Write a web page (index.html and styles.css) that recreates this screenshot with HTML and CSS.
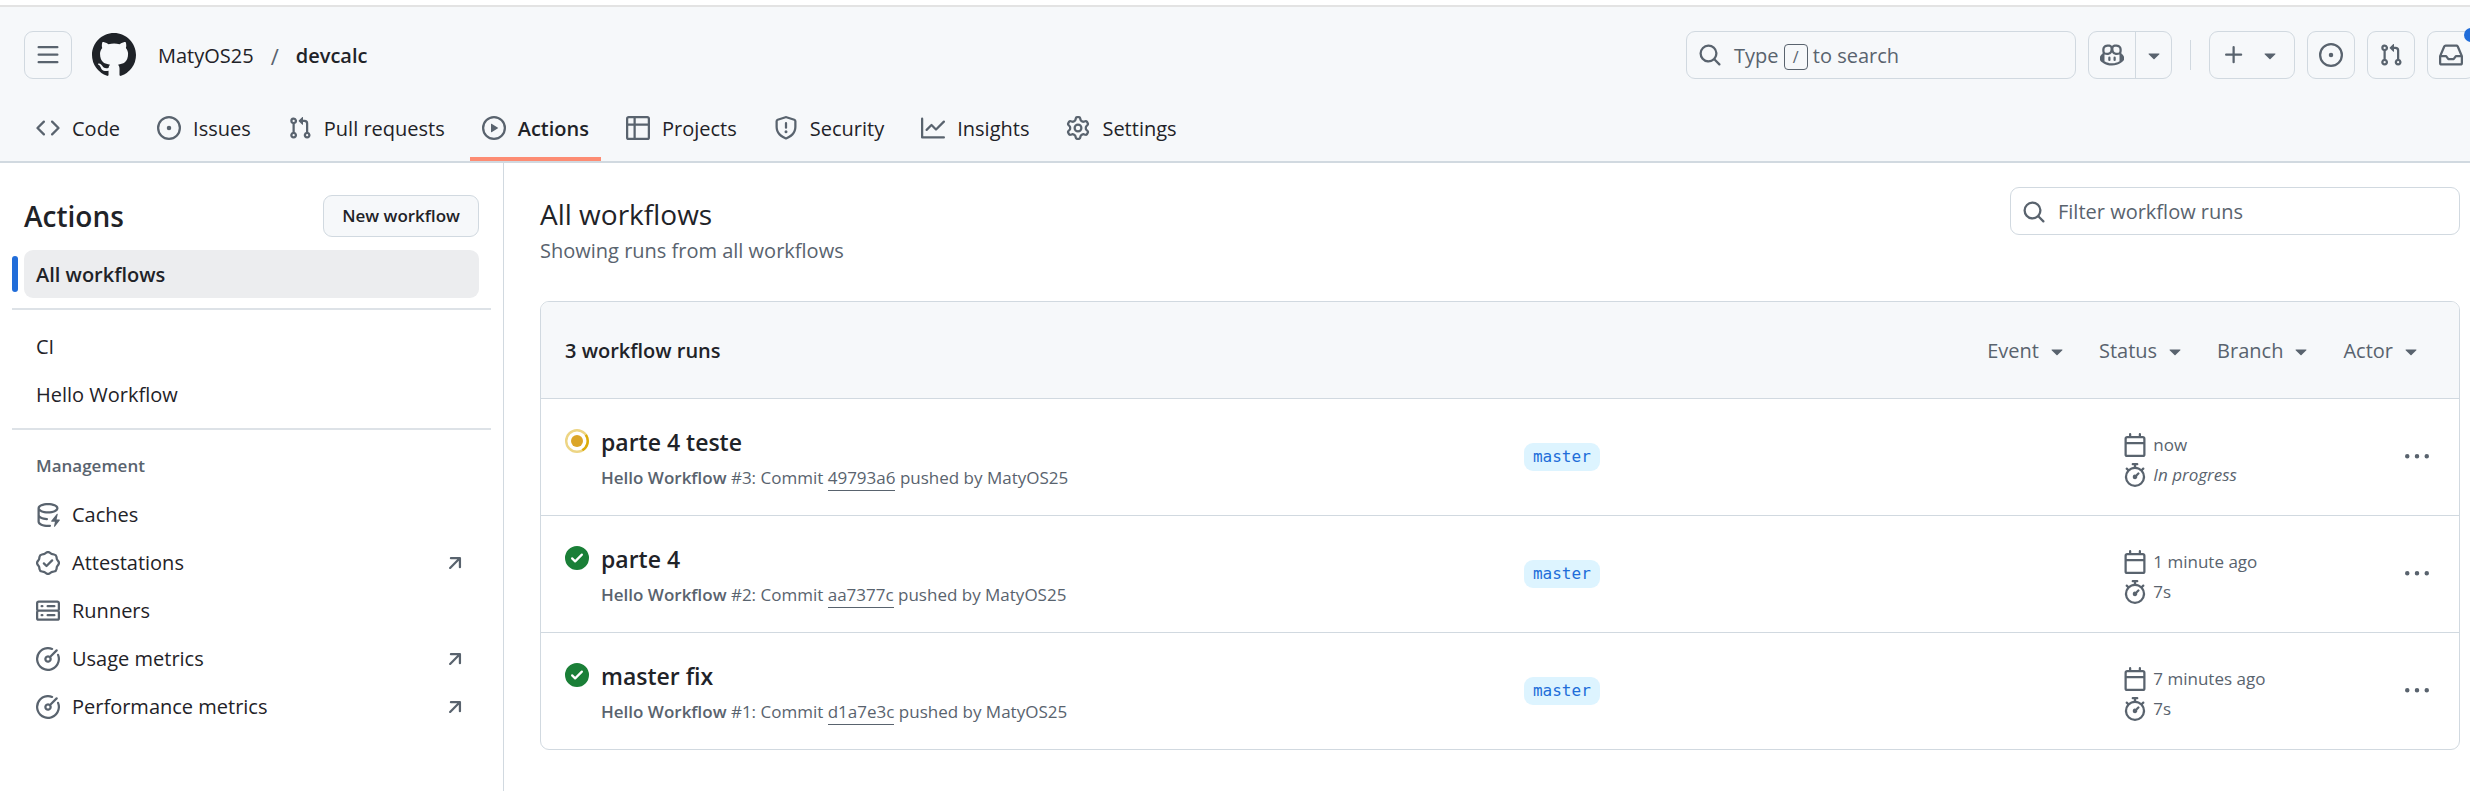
FILE: index.html
```html
<!DOCTYPE html>
<html lang="en">
<head>
<meta charset="utf-8">
<title>Workflow runs · MatyOS25/devcalc</title>
<link rel="stylesheet" href="styles.css">
</head>
<body>
<svg class="sprite" aria-hidden="true">
  <symbol id="bars" viewBox="0 0 16 16"><path d="M1 2.75A.75.75 0 0 1 1.75 2h12.5a.75.75 0 0 1 0 1.5H1.75A.75.75 0 0 1 1 2.75Zm0 5A.75.75 0 0 1 1.75 7h12.5a.75.75 0 0 1 0 1.5H1.75A.75.75 0 0 1 1 7.75ZM1.75 12h12.5a.75.75 0 0 1 0 1.5H1.75a.75.75 0 0 1 0-1.5Z"/></symbol>
  <symbol id="mark" viewBox="0 0 16 16"><path d="M8 0c4.42 0 8 3.58 8 8a8.013 8.013 0 0 1-5.45 7.59c-.4.08-.55-.17-.55-.38 0-.27.01-1.13.01-2.2 0-.75-.25-1.23-.54-1.48 1.78-.2 3.65-.88 3.65-3.95 0-.88-.31-1.59-.82-2.15.08-.2.36-1.02-.08-2.12 0 0-.67-.22-2.2.82-.64-.18-1.32-.27-2-.27-.68 0-1.36.09-2 .27-1.53-1.03-2.2-.82-2.2-.82-.44 1.1-.16 1.92-.08 2.12-.51.56-.82 1.28-.82 2.15 0 3.06 1.86 3.75 3.64 3.95-.23.2-.44.55-.51 1.07-.46.21-1.61.55-2.33-.66-.15-.24-.6-.83-1.23-.82-.67.01-.27.38.01.53.34.19.73.9.82 1.13.16.45.68 1.31 2.69.94 0 .67.01 1.3.01 1.49 0 .21-.15.45-.55.38A7.995 7.995 0 0 1 0 8c0-4.42 3.58-8 8-8Z"/></symbol>
  <symbol id="search" viewBox="0 0 16 16"><path d="M10.68 11.74a6 6 0 0 1-7.922-8.982 6 6 0 0 1 8.982 7.922l3.04 3.04a.749.749 0 0 1-.326 1.275.749.749 0 0 1-.734-.215ZM11.5 7a4.499 4.499 0 1 0-8.997 0A4.499 4.499 0 0 0 11.5 7Z"/></symbol>
  <symbol id="copilot" viewBox="0 0 16 16"><path d="M7.998 15.035c-4.562 0-7.873-2.914-7.998-3.749V9.338c.085-.628.677-1.686 1.588-2.065.013-.07.024-.143.036-.218.029-.183.06-.384.126-.612-.201-.508-.254-1.084-.254-1.656 0-.87.128-1.769.693-2.484.579-.733 1.494-1.124 2.724-1.261 1.206-.134 2.262.034 2.944.765.05.053.096.108.139.165.044-.057.094-.112.143-.165.682-.731 1.738-.899 2.944-.765 1.23.137 2.145.528 2.724 1.261.566.715.693 1.614.693 2.484 0 .572-.053 1.148-.254 1.656.066.228.098.429.126.612.012.076.024.148.037.218.924.385 1.522 1.471 1.591 2.095v1.872c0 .766-3.351 3.795-8.002 3.795Zm0-1.485c2.28 0 4.584-1.11 5.002-1.433V7.862l-.023-.116c-.49.21-1.075.291-1.727.291-1.146 0-2.059-.327-2.71-.991A3.222 3.222 0 0 1 8 6.303a3.24 3.24 0 0 1-.544.743c-.65.664-1.563.991-2.71.991-.652 0-1.236-.081-1.727-.291l-.023.116v4.255c.419.323 2.722 1.433 5.002 1.433ZM6.762 2.83c-.193-.206-.637-.413-1.682-.297-1.019.113-1.479.404-1.713.7-.247.312-.369.789-.369 1.554 0 .793.129 1.171.308 1.371.162.181.519.379 1.442.379.853 0 1.339-.235 1.638-.54.315-.322.527-.827.617-1.553.117-.935-.037-1.395-.241-1.614Zm4.155-.297c-1.044-.116-1.488.091-1.681.297-.204.219-.359.679-.242 1.614.091.726.303 1.231.618 1.553.299.305.784.54 1.638.54.922 0 1.28-.198 1.442-.379.179-.2.308-.578.308-1.371 0-.765-.123-1.242-.37-1.554-.233-.296-.693-.587-1.713-.7Z"/><path d="M6.25 9.037a.75.75 0 0 1 .75.75v1.501a.75.75 0 0 1-1.5 0V9.787a.75.75 0 0 1 .75-.75Zm4.25.75v1.501a.75.75 0 0 1-1.5 0V9.787a.75.75 0 0 1 1.5 0Z"/></symbol>
  <symbol id="caret" viewBox="0 0 16 16"><path d="m4.427 7.427 3.396 3.396a.25.25 0 0 0 .354 0l3.396-3.396A.25.25 0 0 0 11.396 7H4.604a.25.25 0 0 0-.177.427Z"/></symbol>
  <symbol id="plus" viewBox="0 0 16 16"><path d="M7.75 2a.75.75 0 0 1 .75.75V7h4.25a.75.75 0 0 1 0 1.5H8.5v4.25a.75.75 0 0 1-1.5 0V8.5H2.75a.75.75 0 0 1 0-1.5H7V2.75A.75.75 0 0 1 7.75 2Z"/></symbol>
  <symbol id="issue" viewBox="0 0 16 16"><path d="M8 9.5a1.5 1.5 0 1 0 0-3 1.5 1.5 0 0 0 0 3Z"/><path d="M8 0a8 8 0 1 1 0 16A8 8 0 0 1 8 0ZM1.5 8a6.5 6.5 0 1 0 13 0 6.5 6.5 0 0 0-13 0Z"/></symbol>
  <symbol id="pull" viewBox="0 0 16 16"><path d="M1.5 3.25a2.25 2.25 0 1 1 3 2.122v5.256a2.251 2.251 0 1 1-1.5 0V5.372A2.25 2.25 0 0 1 1.5 3.25Zm5.677-.177L9.573.677A.25.25 0 0 1 10 .854V2.5h1A2.5 2.5 0 0 1 13.5 5v5.628a2.251 2.251 0 1 1-1.5 0V5a1 1 0 0 0-1-1h-1v1.646a.25.25 0 0 1-.427.177L7.177 3.427a.25.25 0 0 1 0-.354ZM3.75 2.5a.75.75 0 1 0 0 1.5.75.75 0 0 0 0-1.5Zm0 9.5a.75.75 0 1 0 0 1.5.75.75 0 0 0 0-1.5Zm8.25.75a.75.75 0 1 0 1.5 0 .75.75 0 0 0-1.5 0Z"/></symbol>
  <symbol id="inbox" viewBox="0 0 16 16"><path d="M2.8 2.06A1.75 1.75 0 0 1 4.41 1h7.18c.7 0 1.333.417 1.61 1.06l2.74 6.395c.04.093.06.194.06.295v4.5A1.75 1.75 0 0 1 14.25 15H1.75A1.75 1.75 0 0 1 0 13.25v-4.5c0-.101.02-.202.06-.295Zm1.61.44a.25.25 0 0 0-.23.152L1.887 8H4.75a.75.75 0 0 1 .6.3L6.625 10h2.75l1.275-1.7a.75.75 0 0 1 .6-.3h2.863L11.82 2.652a.25.25 0 0 0-.23-.152Zm10.09 7h-2.875l-1.275 1.7a.75.75 0 0 1-.6.3h-3.5a.75.75 0 0 1-.6-.3L4.375 9.5H1.5v3.75c0 .138.112.25.25.25h12.5a.25.25 0 0 0 .25-.25Z"/></symbol>
  <symbol id="code" viewBox="0 0 16 16"><path d="m11.28 3.22 4.25 4.25a.75.75 0 0 1 0 1.06l-4.25 4.25a.749.749 0 0 1-1.275-.326.749.749 0 0 1 .215-.734L13.94 8l-3.72-3.72a.749.749 0 0 1 .326-1.275.749.749 0 0 1 .734.215Zm-6.56 0a.751.751 0 0 1 1.042.018.751.751 0 0 1 .018 1.042L2.06 8l3.72 3.72a.749.749 0 0 1-.326 1.275.749.749 0 0 1-.734-.215L.47 8.53a.75.75 0 0 1 0-1.06Z"/></symbol>
  <symbol id="play" viewBox="0 0 16 16"><path d="M8 0a8 8 0 1 1 0 16A8 8 0 0 1 8 0ZM1.5 8a6.5 6.5 0 1 0 13 0 6.5 6.5 0 0 0-13 0Zm4.879-2.773 4.264 2.559a.25.25 0 0 1 0 .428l-4.264 2.559A.25.25 0 0 1 6 10.559V5.442a.25.25 0 0 1 .379-.215Z"/></symbol>
  <symbol id="table" viewBox="0 0 16 16"><path d="M0 1.75C0 .784.784 0 1.75 0h12.5C15.216 0 16 .784 16 1.75v12.5A1.75 1.75 0 0 1 14.25 16H1.75A1.75 1.75 0 0 1 0 14.25ZM6.5 6.5v8h7.75a.25.25 0 0 0 .25-.25V6.5Zm8-1.5V1.75a.25.25 0 0 0-.25-.25H6.5V5Zm-13 1.5v7.75c0 .138.112.25.25.25H5v-8ZM5 5V1.5H1.75a.25.25 0 0 0-.25.25V5Z"/></symbol>
  <symbol id="shield" viewBox="0 0 16 16"><path d="M7.467.133a1.748 1.748 0 0 1 1.066 0l5.25 1.68A1.75 1.75 0 0 1 15 3.48V7c0 1.566-.32 3.182-1.303 4.682-.983 1.498-2.585 2.813-5.032 3.855a1.697 1.697 0 0 1-1.33 0c-2.447-1.042-4.049-2.357-5.032-3.855C1.32 10.182 1 8.566 1 7V3.48a1.75 1.75 0 0 1 1.217-1.667Zm.61 1.429a.25.25 0 0 0-.153 0l-5.25 1.68a.25.25 0 0 0-.174.238V7c0 1.358.275 2.666 1.057 3.86.784 1.194 2.121 2.34 4.366 3.297a.196.196 0 0 0 .154 0c2.245-.956 3.582-2.104 4.366-3.298C13.225 9.666 13.5 8.36 13.5 7V3.48a.251.251 0 0 0-.174-.237l-5.25-1.68ZM8.75 4.75v3a.75.75 0 0 1-1.5 0v-3a.75.75 0 0 1 1.5 0ZM9 10.5a1 1 0 1 1-2 0 1 1 0 0 1 2 0Z"/></symbol>
  <symbol id="graph" viewBox="0 0 16 16"><path d="M1.5 1.75V13.5h13.75a.75.75 0 0 1 0 1.5H.75a.75.75 0 0 1-.75-.75V1.75a.75.75 0 0 1 1.5 0Zm14.28 2.53-5.25 5.25a.75.75 0 0 1-1.06 0L7 7.06 4.28 9.78a.751.751 0 0 1-1.042-.018.751.751 0 0 1-.018-1.042l3.25-3.25a.75.75 0 0 1 1.06 0L10 7.94l4.72-4.72a.751.751 0 0 1 1.042.018.751.751 0 0 1 .018 1.042Z"/></symbol>
  <symbol id="gear" viewBox="0 0 16 16"><path d="M8 0a8.2 8.2 0 0 1 .701.031C9.444.095 9.99.645 10.16 1.29l.288 1.107c.018.066.079.158.212.224.231.114.454.243.668.386.123.082.233.09.299.071l1.103-.303c.644-.176 1.392.021 1.82.63.27.385.506.792.704 1.218.315.675.111 1.422-.364 1.891l-.814.806c-.049.048-.098.147-.088.294.016.257.016.515 0 .772-.01.147.038.246.088.294l.814.806c.475.469.679 1.216.364 1.891a7.977 7.977 0 0 1-.704 1.217c-.428.61-1.176.807-1.82.63l-1.102-.302c-.067-.019-.177-.011-.3.071a5.909 5.909 0 0 1-.668.386c-.133.066-.194.158-.211.224l-.29 1.106c-.168.646-.715 1.196-1.458 1.26a8.006 8.006 0 0 1-1.402 0c-.743-.064-1.289-.614-1.458-1.26l-.289-1.106c-.018-.066-.079-.158-.212-.224a5.738 5.738 0 0 1-.668-.386c-.123-.082-.233-.09-.299-.071l-1.103.303c-.644.176-1.392-.021-1.82-.63a8.12 8.12 0 0 1-.704-1.218c-.315-.675-.111-1.422.363-1.891l.815-.806c.05-.048.098-.147.088-.294a6.214 6.214 0 0 1 0-.772c.01-.147-.038-.246-.088-.294l-.815-.806C.635 6.045.431 5.298.746 4.623a7.92 7.92 0 0 1 .704-1.217c.428-.61 1.176-.807 1.82-.63l1.102.302c.067.019.177.011.3-.071.214-.143.437-.272.668-.386.133-.066.194-.158.211-.224l.29-1.106C6.009.645 6.556.095 7.299.03 7.53.01 7.764 0 8 0Zm-.571 1.525c-.036.003-.108.036-.137.146l-.289 1.105c-.147.561-.549.967-.998 1.189-.173.086-.34.183-.5.29-.417.278-.97.423-1.529.27l-1.103-.303c-.109-.03-.175.016-.195.045-.22.312-.412.644-.573.99-.014.031-.021.11.059.19l.815.806c.411.406.562.957.53 1.456a4.709 4.709 0 0 0 0 .582c.032.499-.119 1.05-.53 1.456l-.815.806c-.081.08-.073.159-.059.19.162.346.353.677.573.989.02.03.085.076.195.046l1.102-.303c.56-.153 1.113-.008 1.53.27.161.107.328.204.501.29.447.222.85.629.997 1.189l.289 1.105c.029.109.101.143.137.146a6.6 6.6 0 0 0 1.142 0c.036-.003.108-.036.137-.146l.289-1.105c.147-.561.549-.967.998-1.189.173-.086.34-.183.5-.29.417-.278.97-.423 1.529-.27l1.103.303c.109.029.175-.016.195-.045.22-.313.411-.644.573-.99.014-.031.021-.11-.059-.19l-.815-.806c-.411-.406-.562-.957-.53-1.456a4.709 4.709 0 0 0 0-.582c-.032-.499.119-1.05.53-1.456l.815-.806c.081-.08.073-.159.059-.19a6.464 6.464 0 0 0-.573-.989c-.02-.03-.085-.076-.195-.046l-1.102.303c-.56.153-1.113.008-1.53-.27a4.44 4.44 0 0 0-.501-.29c-.447-.222-.85-.629-.997-1.189l-.289-1.105c-.029-.11-.101-.143-.137-.146a6.6 6.6 0 0 0-1.142 0ZM11 8a3 3 0 1 1-6 0 3 3 0 0 1 6 0ZM9.5 8a1.5 1.5 0 1 0-3.001.001A1.5 1.5 0 0 0 9.5 8Z"/></symbol>
  <symbol id="cache" viewBox="0 0 16 16"><path d="M2.5 5.724V8c0 .248.238.7 1.169 1.159.874.43 2.144.745 3.62.822a.75.75 0 1 1-.078 1.498c-1.622-.085-3.102-.432-4.204-.975a5.565 5.565 0 0 1-.507-.28V12.5c0 .133.058.318.282.551.227.237.591.483 1.101.707 1.015.447 2.47.742 4.117.742.406 0 .802-.018 1.183-.052a.751.751 0 1 1 .134 1.494C8.89 15.98 8.45 16 8 16c-1.805 0-3.475-.32-4.721-.869-.623-.274-1.173-.619-1.579-1.041-.408-.425-.7-.964-.7-1.59v-9c0-.626.292-1.165.7-1.591.406-.42.956-.766 1.579-1.04C4.525.32 6.195 0 8 0c1.806 0 3.476.32 4.721.869.623.274 1.173.619 1.579 1.041.408.425.7.964.7 1.59 0 .626-.292 1.165-.7 1.591-.406.42-.956.766-1.578 1.04C11.475 6.68 9.805 7 8 7c-1.805 0-3.475-.32-4.721-.869a6.15 6.15 0 0 1-.779-.407Zm0-2.224c0 .133.058.318.282.551.227.237.591.483 1.101.707C4.898 5.205 6.353 5.5 8 5.5c1.646 0 3.101-.295 4.118-.742.508-.224.873-.471 1.1-.708.224-.232.282-.417.282-.55 0-.133-.058-.318-.282-.551-.227-.237-.591-.483-1.101-.707C11.102 1.795 9.647 1.5 8 1.5c-1.646 0-3.101.295-4.118.742-.508.224-.873.471-1.1.708-.224.232-.282.417-.282.55Z"/><path d="M14.49 7.582a.375.375 0 0 0-.66-.313l-3.625 4.625a.375.375 0 0 0 .295.606h2.127l-.619 2.922a.375.375 0 0 0 .666.304l3.125-4.125A.375.375 0 0 0 15.5 11h-1.778l.769-3.418Z"/></symbol>
  <symbol id="verified" viewBox="0 0 16 16"><path d="m9.585.52.929.68c.153.112.331.186.518.215l1.138.175a2.678 2.678 0 0 1 2.24 2.24l.174 1.139c.029.187.103.365.215.518l.68.928a2.677 2.677 0 0 1 0 3.17l-.68.928a1.174 1.174 0 0 0-.215.518l-.175 1.138a2.678 2.678 0 0 1-2.241 2.241l-1.138.175a1.17 1.17 0 0 0-.518.215l-.928.68a2.677 2.677 0 0 1-3.17 0l-.928-.68a1.174 1.174 0 0 0-.518-.215L3.83 14.41a2.678 2.678 0 0 1-2.24-2.24l-.175-1.138a1.17 1.17 0 0 0-.215-.518l-.68-.928a2.677 2.677 0 0 1 0-3.17l.68-.928c.112-.153.186-.331.215-.518l.175-1.14a2.678 2.678 0 0 1 2.24-2.24l1.139-.175c.187-.029.365-.103.518-.215l.928-.68a2.677 2.677 0 0 1 3.17 0ZM7.303 1.728l-.927.68a2.67 2.67 0 0 1-1.18.489l-1.137.174a1.179 1.179 0 0 0-.987.987l-.174 1.136a2.677 2.677 0 0 1-.489 1.18l-.68.928a1.18 1.18 0 0 0 0 1.394l.68.927c.256.348.424.753.489 1.18l.174 1.137c.078.509.478.909.987.987l1.136.174a2.67 2.67 0 0 1 1.18.489l.928.68c.414.305.979.305 1.394 0l.927-.68a2.67 2.67 0 0 1 1.18-.489l1.137-.174a1.18 1.18 0 0 0 .987-.987l.174-1.136a2.67 2.67 0 0 1 .489-1.18l.68-.928a1.176 1.176 0 0 0 0-1.394l-.68-.927a2.686 2.686 0 0 1-.489-1.18l-.174-1.137a1.179 1.179 0 0 0-.987-.987l-1.136-.174a2.677 2.677 0 0 1-1.18-.489l-.928-.68a1.176 1.176 0 0 0-1.394 0ZM11.28 6.78l-3.75 3.75a.75.75 0 0 1-1.06 0L4.72 8.78a.751.751 0 0 1 .018-1.042.751.751 0 0 1 1.042-.018L7 8.94l3.22-3.22a.751.751 0 0 1 1.042.018.751.751 0 0 1 .018 1.042Z"/></symbol>
  <symbol id="server" viewBox="0 0 16 16"><path d="M1.75 1h12.5c.966 0 1.75.784 1.75 1.75v4c0 .372-.116.717-.314 1 .198.283.314.628.314 1v4a1.75 1.75 0 0 1-1.75 1.75H1.75A1.75 1.75 0 0 1 0 12.75v-4c0-.358.109-.707.314-1a1.739 1.739 0 0 1-.314-1v-4C0 1.784.784 1 1.75 1ZM1.5 2.75v4c0 .138.112.25.25.25h12.5a.25.25 0 0 0 .25-.25v-4a.25.25 0 0 0-.25-.25H1.75a.25.25 0 0 0-.25.25Zm.25 5.75a.25.25 0 0 0-.25.25v4c0 .138.112.25.25.25h12.5a.25.25 0 0 0 .25-.25v-4a.25.25 0 0 0-.25-.25ZM7 4.75A.75.75 0 0 1 7.75 4h4.5a.75.75 0 0 1 0 1.5h-4.5A.75.75 0 0 1 7 4.75ZM7.75 10h4.5a.75.75 0 0 1 0 1.5h-4.5a.75.75 0 0 1 0-1.5ZM3 4.75A.75.75 0 0 1 3.75 4h.5a.75.75 0 0 1 0 1.5h-.5A.75.75 0 0 1 3 4.75ZM3.75 10h.5a.75.75 0 0 1 0 1.5h-.5a.75.75 0 0 1 0-1.5Z"/></symbol>
  <symbol id="meter" viewBox="0 0 16 16"><path d="M8 1.5a6.5 6.5 0 1 0 6.016 4.04.75.75 0 0 1 1.388-.57A8 8 0 1 1 11.03.596a.75.75 0 1 1-.57 1.388A6.473 6.473 0 0 0 8 1.5Zm6.28.22a.75.75 0 0 1 0 1.06l-4.063 4.064a2.5 2.5 0 1 1-1.06-1.06L13.22 1.72a.75.75 0 0 1 1.06 0ZM7 8a1 1 0 1 0 2 0 1 1 0 0 0-2 0Z"/></symbol>
  <symbol id="arrow" viewBox="0 0 16 16"><path d="M4.53 4.75A.75.75 0 0 1 5.28 4h6.01a.75.75 0 0 1 .75.75v6.01a.75.75 0 0 1-1.5 0v-4.2l-5.26 5.261a.749.749 0 0 1-1.275-.326.749.749 0 0 1 .215-.734L9.48 5.5h-4.2a.75.75 0 0 1-.75-.75Z"/></symbol>
  <symbol id="progress" viewBox="0 0 16 16"><circle cx="8" cy="8" r="7.2" fill="none" stroke="#dbab0a" stroke-opacity=".5" stroke-width="1.6"/><path d="M13.9 3.9A7.2 7.2 0 0 1 11.6 14.2" fill="none" stroke="#dbab0a" stroke-width="1.6"/><circle cx="8" cy="8" r="4" fill="#dba528"/></symbol>
  <symbol id="success" viewBox="0 0 16 16"><path d="M8 16A8 8 0 1 1 8 0a8 8 0 0 1 0 16Zm3.78-9.72a.751.751 0 0 0-.018-1.042.751.751 0 0 0-1.042-.018L6.75 9.19 5.28 7.72a.751.751 0 0 0-1.042.018.751.751 0 0 0-.018 1.042l2 2a.75.75 0 0 0 1.06 0Z"/></symbol>
  <symbol id="calendar" viewBox="0 0 16 16"><path d="M4.75 0a.75.75 0 0 1 .75.75V2h5V.75a.75.75 0 0 1 1.5 0V2h1.25c.966 0 1.75.784 1.75 1.75v10.5A1.75 1.75 0 0 1 13.25 16H2.75A1.75 1.75 0 0 1 1 14.25V3.75C1 2.784 1.784 2 2.75 2H4V.75A.75.75 0 0 1 4.75 0ZM2.5 7.5v6.75c0 .138.112.25.25.25h10.5a.25.25 0 0 0 .25-.25V7.5Zm10.75-4H2.75a.25.25 0 0 0-.25.25V6h11V3.75a.25.25 0 0 0-.25-.25Z"/></symbol>
  <symbol id="watch" viewBox="0 0 16 16"><path d="M5.75.75A.75.75 0 0 1 6.5 0h3a.75.75 0 0 1 0 1.5h-.75v1l-.001.041a6.724 6.724 0 0 1 3.464 1.435l.007-.006.75-.75a.749.749 0 0 1 1.275.326.749.749 0 0 1-.215.734l-.75.75-.006.007a6.75 6.75 0 1 1-10.548 0L2.72 5.03l-.75-.75a.751.751 0 0 1 .018-1.042.751.751 0 0 1 1.042-.018l.75.75.007.006A6.72 6.72 0 0 1 7.25 2.541V1.5H6.5a.75.75 0 0 1-.75-.75ZM8 14.5a5.25 5.25 0 1 0-.001-10.501A5.25 5.25 0 0 0 8 14.5Zm.389-6.7 1.33-1.33a.75.75 0 1 1 1.061 1.06L9.45 8.861A1.503 1.503 0 0 1 8 10.75a1.499 1.499 0 1 1 .389-2.95Z"/></symbol>
  <symbol id="kebab" viewBox="0 0 16 16"><path d="M8 9a1.5 1.5 0 1 0 0-3 1.5 1.5 0 0 0 0 3ZM1.5 9a1.5 1.5 0 1 0 0-3 1.5 1.5 0 0 0 0 3Zm13 0a1.5 1.5 0 1 0 0-3 1.5 1.5 0 0 0 0 3Z"/></symbol>
</svg>

<header class="header">
  <div class="topbar">
    <button class="box-btn" aria-label="Open menu"><svg class="icon"><use href="#bars"/></svg></button>
    <a class="logo" href="#" aria-label="Homepage"><svg><use href="#mark"/></svg></a>
    <nav class="crumbs" aria-label="Breadcrumb">
      <a href="#">MatyOS25</a><span class="slash">/</span><a class="strong" href="#">devcalc</a>
    </nav>
    <div class="tools">
      <button class="search"><svg class="icon"><use href="#search"/></svg><span>Type <kbd>/</kbd> to search</span></button>
      <div class="split">
        <button class="split-main" aria-label="Copilot"><svg class="icon"><use href="#copilot"/></svg></button>
        <button class="split-menu" aria-label="Copilot menu"><svg class="icon"><use href="#caret"/></svg></button>
      </div>
      <span class="rule"></span>
      <button class="box-btn create" aria-label="Create new"><svg class="icon"><use href="#plus"/></svg><svg class="icon"><use href="#caret"/></svg></button>
      <a class="box-btn" href="#" aria-label="Issues"><svg class="icon"><use href="#issue"/></svg></a>
      <a class="box-btn" href="#" aria-label="Pull requests"><svg class="icon"><use href="#pull"/></svg></a>
      <a class="box-btn inbox" href="#" aria-label="Notifications"><svg class="icon"><use href="#inbox"/></svg><span class="dot"></span></a>
    </div>
  </div>
  <nav class="tabs" aria-label="Repository">
    <a href="#"><svg class="icon"><use href="#code"/></svg><span>Code</span></a>
    <a href="#"><svg class="icon"><use href="#issue"/></svg><span>Issues</span></a>
    <a href="#"><svg class="icon"><use href="#pull"/></svg><span>Pull requests</span></a>
    <a href="#" class="current" aria-current="page"><svg class="icon"><use href="#play"/></svg><span>Actions</span></a>
    <a href="#"><svg class="icon"><use href="#table"/></svg><span>Projects</span></a>
    <a href="#"><svg class="icon"><use href="#shield"/></svg><span>Security</span></a>
    <a href="#"><svg class="icon"><use href="#graph"/></svg><span>Insights</span></a>
    <a href="#"><svg class="icon"><use href="#gear"/></svg><span>Settings</span></a>
  </nav>
</header>

<div class="page">
  <aside class="sidebar">
    <div class="side-head"><h2>Actions</h2><a class="new" href="#">New workflow</a></div>
    <ul><li class="selected"><a href="#">All workflows</a></li></ul>
    <hr>
    <ul>
      <li><a href="#">CI</a></li>
      <li><a href="#">Hello Workflow</a></li>
    </ul>
    <hr>
    <h3>Management</h3>
    <ul>
      <li><a href="#"><svg class="icon"><use href="#cache"/></svg><span>Caches</span></a></li>
      <li><a href="#"><svg class="icon"><use href="#verified"/></svg><span>Attestations</span><svg class="icon"><use href="#arrow"/></svg></a></li>
      <li><a href="#"><svg class="icon"><use href="#server"/></svg><span>Runners</span></a></li>
      <li><a href="#"><svg class="icon"><use href="#meter"/></svg><span>Usage metrics</span><svg class="icon"><use href="#arrow"/></svg></a></li>
      <li><a href="#"><svg class="icon"><use href="#meter"/></svg><span>Performance metrics</span><svg class="icon"><use href="#arrow"/></svg></a></li>
    </ul>
  </aside>

  <main class="main">
    <div class="main-head">
      <div>
        <h1>All workflows</h1>
        <p>Showing runs from all workflows</p>
      </div>
      <label class="filter"><svg class="icon"><use href="#search"/></svg><input type="text" placeholder="Filter workflow runs" aria-label="Filter workflow runs"></label>
    </div>

    <section class="runs">
      <div class="runs-head">
        <strong>3 workflow runs</strong>
        <div class="menus">
          <button>Event<svg class="icon"><use href="#caret"/></svg></button>
          <button>Status<svg class="icon"><use href="#caret"/></svg></button>
          <button>Branch<svg class="icon"><use href="#caret"/></svg></button>
          <button>Actor<svg class="icon"><use href="#caret"/></svg></button>
        </div>
      </div>

      <article class="run">
        <div class="run-info">
          <svg class="icon"><use href="#progress"/></svg>
          <div>
            <a class="run-title" href="#">parte 4 teste</a>
            <p><b>Hello Workflow</b> #3: Commit <a href="#">49793a6</a> pushed by MatyOS25</p>
          </div>
        </div>
        <div class="run-ref"><a class="branch" href="#">master</a></div>
        <div class="run-end">
          <div class="times">
            <span><svg class="icon"><use href="#calendar"/></svg>now</span>
            <span><svg class="icon"><use href="#watch"/></svg><i>In progress</i></span>
          </div>
          <button class="more" aria-label="Run options"><svg class="icon"><use href="#kebab"/></svg></button>
        </div>
      </article>

      <article class="run">
        <div class="run-info">
          <svg class="icon ok"><use href="#success"/></svg>
          <div>
            <a class="run-title" href="#">parte 4</a>
            <p><b>Hello Workflow</b> #2: Commit <a href="#">aa7377c</a> pushed by MatyOS25</p>
          </div>
        </div>
        <div class="run-ref"><a class="branch" href="#">master</a></div>
        <div class="run-end">
          <div class="times">
            <span><svg class="icon"><use href="#calendar"/></svg>1 minute ago</span>
            <span><svg class="icon"><use href="#watch"/></svg>7s</span>
          </div>
          <button class="more" aria-label="Run options"><svg class="icon"><use href="#kebab"/></svg></button>
        </div>
      </article>

      <article class="run">
        <div class="run-info">
          <svg class="icon ok"><use href="#success"/></svg>
          <div>
            <a class="run-title" href="#">master fix</a>
            <p><b>Hello Workflow</b> #1: Commit <a href="#">d1a7e3c</a> pushed by MatyOS25</p>
          </div>
        </div>
        <div class="run-ref"><a class="branch" href="#">master</a></div>
        <div class="run-end">
          <div class="times">
            <span><svg class="icon"><use href="#calendar"/></svg>7 minutes ago</span>
            <span><svg class="icon"><use href="#watch"/></svg>7s</span>
          </div>
          <button class="more" aria-label="Run options"><svg class="icon"><use href="#kebab"/></svg></button>
        </div>
      </article>
    </section>
  </main>
</div>
</body>
</html>
```
FILE: styles.css
```css
* { box-sizing: border-box; }

:root {
  --fg: #1f2328;
  --muted: #59636e;
  --line: #d1d9e0;
  --soft: #f6f8fa;
  --accent: #216dd9;
}

body {
  margin: 0;
  min-height: 100vh;
  display: flex;
  flex-direction: column;
  overflow-x: hidden;
  background: #fff;
  color: var(--fg);
  font: 20px/30px "Open Sans", "Noto Sans", sans-serif;
}

a { color: inherit; text-decoration: none; }
h1, h2, h3, p, ul { margin: 0; padding: 0; }
ul { list-style: none; }
button, input { font: inherit; color: inherit; }
button { padding: 0; border: 0; background: none; }
.sprite { display: none; }
.icon { width: 24px; height: 24px; flex: none; fill: var(--muted); }

/* Header */
.header {
  margin-top: 5px;
  border-top: 2px solid #e3e3e3;
  border-bottom: 2px solid var(--line);
  background: var(--soft);
  overflow: hidden;
}
.topbar { display: flex; align-items: center; padding: 24px 0 0 24px; }
.box-btn {
  width: 48px;
  height: 48px;
  display: flex;
  align-items: center;
  justify-content: center;
  border: 1px solid var(--line);
  border-radius: 9px;
}
.logo { margin-left: 20px; height: 44px; }
.logo svg { width: 44px; height: 44px; fill: var(--fg); }
.crumbs { display: flex; margin-left: 22px; padding-top: 2px; }
.slash { margin: 0 17px; font-size: 22px; color: var(--muted); }
.strong { font-weight: 600; }
.tools { display: flex; align-items: center; gap: 12px; margin: 0 -5px 0 auto; }
.search {
  width: 390px;
  height: 48px;
  display: flex;
  align-items: center;
  gap: 12px;
  padding: 0 11px;
  border: 1px solid var(--line);
  border-radius: 9px;
  color: var(--muted);
}
.search span { padding-top: 2px; }
kbd {
  padding: 1px 8px;
  border: 1px solid var(--muted);
  border-radius: 4px;
  font: 16px/24px "Open Sans", "Noto Sans", sans-serif;
}
.split { display: flex; height: 48px; border: 1px solid var(--line); border-radius: 9px; }
.split button { display: flex; align-items: center; justify-content: center; }
.split-main { width: 47px; border-right: 1px solid var(--line); }
.split-menu { width: 35px; }
.rule { width: 1px; height: 30px; margin: 0 6px; background: var(--line); }
.create { width: 86px; gap: 12px; }
.inbox { position: relative; }
.dot {
  position: absolute;
  top: -4px;
  right: -4px;
  width: 14px;
  height: 14px;
  border-radius: 50%;
  background: var(--accent);
}

.tabs { display: flex; gap: 13px; padding: 12px 24px 0; margin-top: 12px; }
.tabs a {
  display: flex;
  align-items: center;
  gap: 12px;
  padding: 9px 12px 13px;
  border-bottom: 4px solid transparent;
}
.tabs span { padding-top: 2px; }
.tabs .current { font-weight: 600; border-color: #fd8c73; }

/* Sidebar */
.page { flex: 1; display: flex; }
.sidebar { width: 504px; flex: none; padding: 32px 24px; border-right: 1px solid var(--line); }
.side-head { display: flex; align-items: center; justify-content: space-between; margin-bottom: 13px; }
.side-head h2 { font-size: 28px; line-height: 42px; font-weight: 600; }
.new {
  padding: 5px 18px;
  border: 1px solid var(--line);
  border-radius: 9px;
  background: var(--soft);
  font-size: 17px;
  font-weight: 600;
}
.sidebar li a { display: flex; align-items: center; gap: 12px; padding: 10px 12px 8px; }
.sidebar li span { flex: 1; }
.selected { position: relative; border-radius: 9px; background: #ecedef; font-weight: 600; }
.selected::before {
  content: "";
  position: absolute;
  left: -12px;
  top: 6px;
  width: 6px;
  height: 36px;
  border-radius: 9px;
  background: var(--accent);
}
.sidebar hr { height: 2px; margin: 10px -12px 12px; border: 0; background: #dde2e7; }
.sidebar h3 { padding: 9px 12px; font-size: 17px; font-weight: 600; color: var(--muted); }

/* Runs */
.main { flex: 1; padding: 24px 10px 40px 36px; }
.main-head { display: flex; justify-content: space-between; }
.main-head h1 { padding-top: 5px; font-size: 28px; line-height: 44px; font-weight: 400; }
.main-head p { color: var(--muted); }
.filter {
  width: 450px;
  height: 48px;
  display: flex;
  align-items: center;
  gap: 12px;
  padding: 2px 11px 0;
  border: 1px solid var(--line);
  border-radius: 9px;
}
.filter input { flex: 1; min-width: 0; padding: 0; border: 0; outline: 0; background: none; }
.filter input::placeholder { color: var(--muted); opacity: 1; }

.runs { margin-top: 35px; border: 1px solid var(--line); border-radius: 9px; overflow: hidden; }
.runs-head {
  display: flex;
  align-items: center;
  justify-content: space-between;
  padding: 34px 36px 32px 24px;
  background: var(--soft);
}
.runs-head strong { font-weight: 600; }
.menus { display: flex; gap: 30px; color: var(--muted); }
.menus button { display: flex; align-items: center; gap: 6px; }
.run {
  display: grid;
  grid-template-columns: 984fr 600fr 336fr;
  align-items: center;
  min-height: 117px;
  border-top: 1px solid var(--line);
}
.run-info { display: flex; gap: 12px; padding: 6px 0 0 24px; }
.run-info .icon { margin-top: 5px; }
.ok { fill: #1a7f37; }
.run-title { display: block; font-size: 23px; line-height: 36px; font-weight: 600; }
.run p { font-size: 17px; line-height: 36px; color: var(--muted); }
.run p b { font-weight: 600; }
.run p a { padding-bottom: 1px; border-bottom: 1px solid var(--muted); }
.run-ref { display: flex; }
.branch {
  padding: 0 9px;
  border-radius: 9px;
  background: #ddf4ff;
  color: var(--accent);
  font: 16px/28px "DejaVu Sans Mono", monospace;
}
.run-end { display: flex; align-items: center; justify-content: space-between; padding-right: 30px; }
.times { padding-top: 5px; }
.times span { display: flex; align-items: center; gap: 6px; font-size: 17px; color: var(--muted); }
.more { display: flex; }
```
